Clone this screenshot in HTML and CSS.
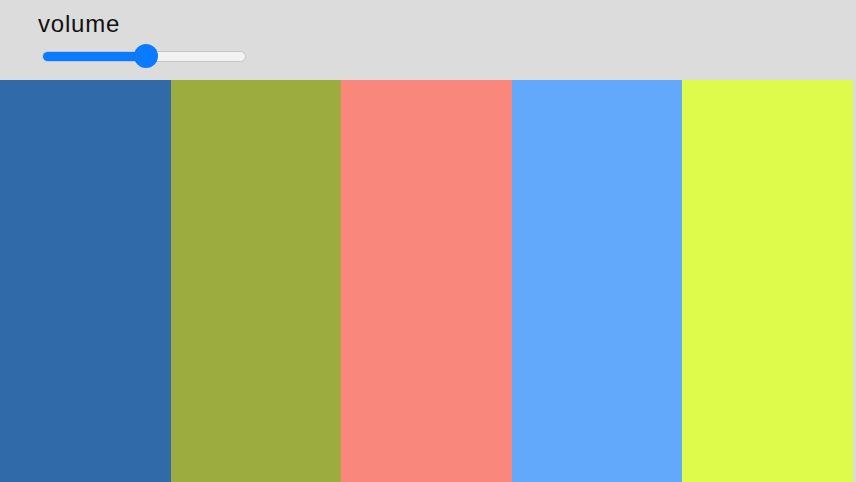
FILE: index.html
```html
<!DOCTYPE html>
<html>
<head>
<meta charset="utf-8">
<link rel="stylesheet" href="styles.css">
</head>
<body>
<div class="header">
  <div class="label">volume</div>
  <div class="slider">
    <div class="track">
      <div class="fill"></div>
    </div>
    <div class="thumb"></div>
  </div>
</div>
<div class="bars">
  <div class="bar b1"></div>
  <div class="bar b2"></div>
  <div class="bar b3"></div>
  <div class="bar b4"></div>
  <div class="bar b5"></div>
</div>
</body>
</html>
```
FILE: styles.css
```css
html, body {
  margin: 0;
  padding: 0;
  background: #dcdcdc;
  height: 100%;
}
body {
  display: flex;
  flex-direction: column;
  font-family: "Liberation Sans", Arial, sans-serif;
}
.header {
  height: 80px;
  box-sizing: border-box;
  padding: 9px 0 0 38px;
  display: flex;
  flex-direction: column;
}
.label {
  font-size: 24px;
  line-height: 30px;
  letter-spacing: 0.8px;
  color: #111;
}
.slider {
  position: relative;
  margin-top: 5px;
  margin-left: 4px;
  width: 204px;
  height: 24px;
  display: flex;
  align-items: center;
}
.track {
  width: 100%;
  height: 11px;
  box-sizing: border-box;
  border-radius: 6px;
  background: #f2f2f2;
  border: 1px solid #c6c6c6;
  overflow: hidden;
}
.fill {
  width: 104px;
  height: 100%;
  background: #0a7aff;
}
.thumb {
  position: absolute;
  left: 92px;
  top: 0;
  width: 24px;
  height: 24px;
  border-radius: 50%;
  background: #0a7aff;
}
.bars {
  flex: 1;
  display: flex;
  width: 853px;
}
.bar {
  flex: 1;
}
.b1 { background: #316aa9; }
.b2 { background: #9cac3e; }
.b3 { background: #fa877b; }
.b4 { background: #62a9fc; }
.b5 { background: #defb4b; }
```
